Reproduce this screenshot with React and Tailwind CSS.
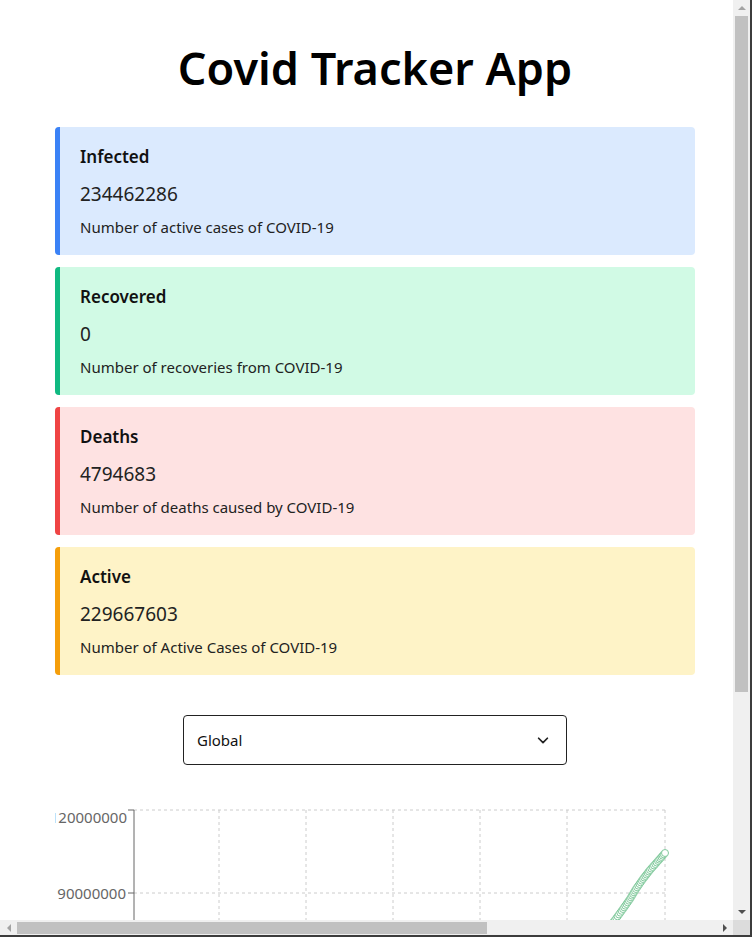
import React from "react";

const cards = [
  { title: "Infected", value: "234462286", desc: "Number of active cases of COVID-19", bg: "bg-[#dbeafe]", bar: "bg-[#3b82f6]" },
  { title: "Recovered", value: "0", desc: "Number of recoveries from COVID-19", bg: "bg-[#d1fae5]", bar: "bg-[#10b981]" },
  { title: "Deaths", value: "4794683", desc: "Number of deaths caused by COVID-19", bg: "bg-[#fee2e2]", bar: "bg-[#ef4444]" },
  { title: "Active", value: "229667603", desc: "Number of Active Cases of COVID-19", bg: "bg-[#fef3c7]", bar: "bg-[#f59e0b]" },
];

function Card({ c }) {
  return (
    <div className={`flex h-[128px] rounded overflow-hidden ${c.bg}`}>
      <div className={`w-[5px] shrink-0 ${c.bar}`} />
      <div className="flex flex-col pl-[20px] pt-[18px]">
        <div className="text-[17px] leading-[24px] font-semibold text-[#111]">{c.title}</div>
        <div className="mt-[13px] text-[19px] leading-[24px] text-[#222]">{c.value}</div>
        <div className="mt-[9px] text-[15px] leading-[24px] text-[#222]">{c.desc}</div>
      </div>
    </div>
  );
}

function Chart() {
  const vx = [219, 306, 393, 480, 567, 665];
  const pts = [];
  const path = [
    [665, 853], [658, 861], [650, 870], [643, 879], [636, 889], [630, 899], [623, 909], [615, 920], [606, 931], [598, 941],
  ];
  for (let i = 0; i < path.length - 1; i++) {
    const [x1, y1] = path[i];
    const [x2, y2] = path[i + 1];
    const n = 6;
    for (let k = 0; k < n; k++) {
      pts.push([x1 + ((x2 - x1) * k) / n, y1 + ((y2 - y1) * k) / n]);
    }
  }
  const top = 810;
  return (
    <svg width="695" height="200" viewBox="55 800 695 200" className="block shrink-0">
      <g stroke="#cccccc" strokeDasharray="3 3" fill="none">
        <line x1="134" y1={top} x2="665" y2={top} />
        <line x1="134" y1="893" x2="665" y2="893" />
        {vx.map((x) => (
          <line key={x} x1={x} y1={top} x2={x} y2="1000" />
        ))}
      </g>
      <g stroke="#666666" fill="none">
        <line x1="134" y1={top} x2="134" y2="1000" />
        <line x1="128" y1={top} x2="134" y2={top} />
        <line x1="128" y1="893" x2="134" y2="893" />
      </g>
      <g fill="#666666" fontSize="15" textAnchor="end" style={{ fontFamily: "'Noto Sans', sans-serif" }}>
        <text x="127" y="823">120000000</text>
        <text x="126" y="899">90000000</text>
      </g>
      <polyline points={pts.map((p) => p.join(",")).join(" ")} fill="none" stroke="#82ca9d" strokeWidth="1" />
      {pts.slice().reverse().map((p, i) => (
        <circle key={i} cx={p[0]} cy={p[1]} r="3.5" fill="#fff" stroke="#82ca9d" strokeWidth="1" />
      ))}
    </svg>
  );
}

function Tri({ dir, color }) {
  const d = {
    up: "M0,4 L4,0 L8,4 Z",
    down: "M0,0 L8,0 L4,4 Z",
    left: "M4,0 L4,8 L0,4 Z",
    right: "M0,0 L4,4 L0,8 Z",
  }[dir];
  const w = dir === "up" || dir === "down" ? 8 : 4;
  const h = dir === "up" || dir === "down" ? 4 : 8;
  return (
    <svg width={w} height={h} viewBox={`0 0 ${w} ${h}`}>
      <path d={d} fill={color} />
    </svg>
  );
}

export default function App() {
  return (
    <div className="w-[752px] h-[937px] flex flex-col overflow-hidden bg-white border-r-2 border-b-2 border-[#3c3c3c]" style={{ fontFamily: "'Noto Sans', 'Open Sans', sans-serif" }}>
      <div className="flex flex-1 min-h-0">
        <div className="flex-1 min-w-0 overflow-hidden">
          <div className="w-[750px] flex flex-col items-center">
            <h1 className="mt-[37px] text-[45px] leading-[62px] font-semibold text-black">Covid Tracker App</h1>
            <div className="mt-[28px] w-[640px] flex flex-col gap-[12px]">
              {cards.map((c) => (
                <Card key={c.title} c={c} />
              ))}
            </div>
            <div className="mt-[40px] w-[384px] h-[50px] border border-[#222] rounded flex items-center justify-between pl-[13px] pr-[16px]">
              <span className="text-[15px] text-[#111]">Global</span>
              <svg width="14" height="14" viewBox="0 0 16 16" fill="none" stroke="#222" strokeWidth="2" strokeLinecap="round" strokeLinejoin="round">
                <path d="M3 6 L8 11 L13 6" />
              </svg>
            </div>
            <div className="mt-[35px] w-[750px] flex">
              <div className="w-[55px] shrink-0" />
              <Chart />
            </div>
          </div>
        </div>
        <div className="w-[17px] shrink-0 bg-[#f0f0f0] flex flex-col items-center">
          <div className="h-[16px] flex items-center justify-center"><Tri dir="up" color="#a3a3a3" /></div>
          <div className="w-[13px] h-[676px] bg-[#c1c1c1]" />
          <div className="flex-1" />
          <div className="h-[16px] flex items-center justify-center"><Tri dir="down" color="#505050" /></div>
        </div>
      </div>
      <div className="h-[15px] shrink-0 flex bg-[#f0f0f0]">
        <div className="w-[17px] flex items-center justify-center"><Tri dir="left" color="#a3a3a3" /></div>
        <div className="flex-1 flex items-center">
          <div className="w-[470px] h-[12px] bg-[#c1c1c1]" />
        </div>
        <div className="w-[16px] flex items-center justify-center"><Tri dir="right" color="#505050" /></div>
        <div className="w-[17px] bg-[#dcdcdc]" />
      </div>
    </div>
  );
}
